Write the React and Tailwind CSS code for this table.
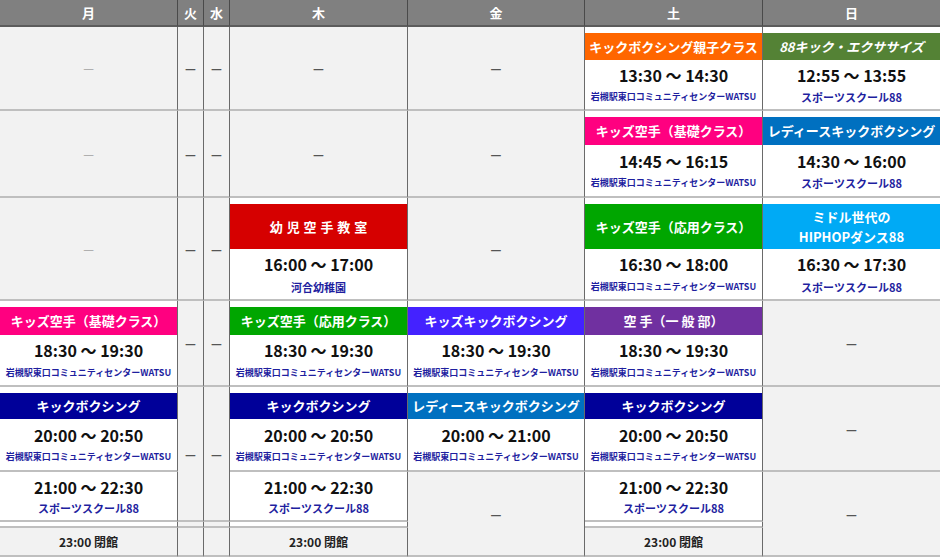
const days = ['月', '火', '水', '木', '金', '土', '日']

const WATSU = '岩槻駅東口コミュニティセンターWATSU'
const SS88 = 'スポーツスクール88'

function Cell({ last, className = '', children }) {
  return (
    <div className={`border-b-2 border-b-[#bfbfbf] ${last ? '' : 'border-r border-r-[#6a6a6a]'} ${className}`}>
      {children}
    </div>
  )
}

function Empty({ light, dash = true, last, span = '' }) {
  return (
    <Cell last={last} className={`bg-[#f2f2f2] flex items-center justify-center ${span}`}>
      {dash && (
        <span className={`text-[12px] leading-none ${light ? 'text-[#a0a0a0]' : 'text-[#555] font-bold'}`}>—</span>
      )}
    </Cell>
  )
}

function Times({ time, venue, big }) {
  return (
    <div className="flex-1 flex flex-col items-center justify-evenly">
      <p className="text-[16px] leading-[20px] font-bold text-[#111] whitespace-nowrap">{time}</p>
      <p className={`font-bold text-[#1f1f9f] whitespace-nowrap ${big ? 'text-[11px] leading-[14px]' : 'text-[9px] leading-[14px]'}`}>
        {venue}
      </p>
    </div>
  )
}

function Lesson({ title, color, bannerH, time, venue, big, italic, spaced, last }) {
  return (
    <Cell last={last} className="bg-white flex flex-col pt-[6px]">
      <div
        className={`${bannerH} ${color} flex flex-col items-center justify-center text-white font-bold text-[13px] leading-[20px] text-center whitespace-nowrap ${italic ? 'italic' : ''} ${spaced ? 'tracking-[0.3em] pl-[0.3em]' : ''}`}
      >
        {title}
      </div>
      <Times time={time} venue={venue} big={big} />
    </Cell>
  )
}

function Slot({ time, venue, big }) {
  return (
    <Cell className="bg-white flex flex-col">
      <Times time={time} venue={venue} big={big} />
    </Cell>
  )
}

function Closing() {
  return (
    <Cell className="bg-[#f2f2f2] flex items-center justify-center">
      <span className="text-[12px] leading-none font-bold text-[#222]">23:00 閉館</span>
    </Cell>
  )
}

export default function App() {
  return (
    <div className="w-[940px] h-[557px] overflow-hidden bg-white font-['Noto_Sans_CJK_JP',sans-serif]">
      <div className="grid grid-cols-[178px_26px_26px_178px_177px_178px_177px] grid-rows-[27px_84px_87px_103px_86px_85px_50px_6px_29px]">
        {/* header */}
        {days.map((d, i) => (
          <div
            key={d}
            className={`bg-[#808080] border-b-2 border-b-[#5c5c5c] flex items-center justify-center text-white font-bold text-[13px] ${i < 6 ? 'border-r border-r-[#4a4a4a]' : ''}`}
          >
            {d}
          </div>
        ))}

        {/* 13:00 row */}
        <Empty light />
        <Empty />
        <Empty />
        <Empty />
        <Empty />
        <Lesson title="キックボクシング親子クラス" color="bg-[#ff6600]" bannerH="h-[27px]" time="13:30 ～ 14:30" venue={WATSU} />
        <Lesson title="88キック・エクササイズ" italic color="bg-[#548235]" bannerH="h-[27px]" time="12:55 ～ 13:55" venue={SS88} big last />

        {/* 14:00 row */}
        <Empty light />
        <Empty />
        <Empty />
        <Empty />
        <Empty />
        <Lesson title="キッズ空手（基礎クラス）" color="bg-[#ff0080]" bannerH="h-[28px]" time="14:45 ～ 16:15" venue={WATSU} />
        <Lesson title="レディースキックボクシング" color="bg-[#0070c0]" bannerH="h-[28px]" time="14:30 ～ 16:00" venue={SS88} big last />

        {/* 16:00 row */}
        <Empty light />
        <Empty />
        <Empty />
        <Lesson title="幼児空手教室" spaced color="bg-[#d60000]" bannerH="h-[45px]" time="16:00 ～ 17:00" venue="河合幼稚園" big />
        <Empty />
        <Lesson title="キッズ空手（応用クラス）" color="bg-[#00a600]" bannerH="h-[45px]" time="16:30 ～ 18:00" venue={WATSU} />
        <Lesson
          title={<><span>ミドル世代の</span><span>HIPHOPダンス88</span></>}
          color="bg-[#00aaf5]"
          bannerH="h-[45px]"
          time="16:30 ～ 17:30"
          venue={SS88}
          big
          last
        />

        {/* 18:30 row */}
        <Lesson title="キッズ空手（基礎クラス）" color="bg-[#ff0080]" bannerH="h-[28px]" time="18:30 ～ 19:30" venue={WATSU} />
        <Empty />
        <Empty />
        <Lesson title="キッズ空手（応用クラス）" color="bg-[#00a600]" bannerH="h-[28px]" time="18:30 ～ 19:30" venue={WATSU} />
        <Lesson title="キッズキックボクシング" color="bg-[#4422ff]" bannerH="h-[28px]" time="18:30 ～ 19:30" venue={WATSU} />
        <Lesson title="空 手（一 般 部）" color="bg-[#7030a0]" bannerH="h-[28px]" time="18:30 ～ 19:30" venue={WATSU} />
        <Empty last />

        {/* 20:00 row */}
        <Lesson title="キックボクシング" color="bg-[#000099]" bannerH="h-[26px]" time="20:00 ～ 20:50" venue={WATSU} />
        <Empty span="row-span-2" />
        <Empty span="row-span-2" />
        <Lesson title="キックボクシング" color="bg-[#000099]" bannerH="h-[26px]" time="20:00 ～ 20:50" venue={WATSU} />
        <Lesson title="レディースキックボクシング" color="bg-[#0070c0]" bannerH="h-[26px]" time="20:00 ～ 21:00" venue={WATSU} />
        <Lesson title="キックボクシング" color="bg-[#000099]" bannerH="h-[26px]" time="20:00 ～ 20:50" venue={WATSU} />
        <Empty last />

        {/* 21:00 row */}
        <Slot time="21:00 ～ 22:30" venue={SS88} big />
        <Slot time="21:00 ～ 22:30" venue={SS88} big />
        <Empty span="row-span-3" />
        <Slot time="21:00 ～ 22:30" venue={SS88} big />
        <Empty span="row-span-3" last />

        {/* spacer row */}
        <Cell className="bg-white" />
        <Empty dash={false} />
        <Empty dash={false} />
        <Cell className="bg-white" />
        <Cell className="bg-white" />

        {/* closing row */}
        <Closing />
        <Empty dash={false} />
        <Empty dash={false} />
        <Closing />
        <Closing />
      </div>
    </div>
  )
}
